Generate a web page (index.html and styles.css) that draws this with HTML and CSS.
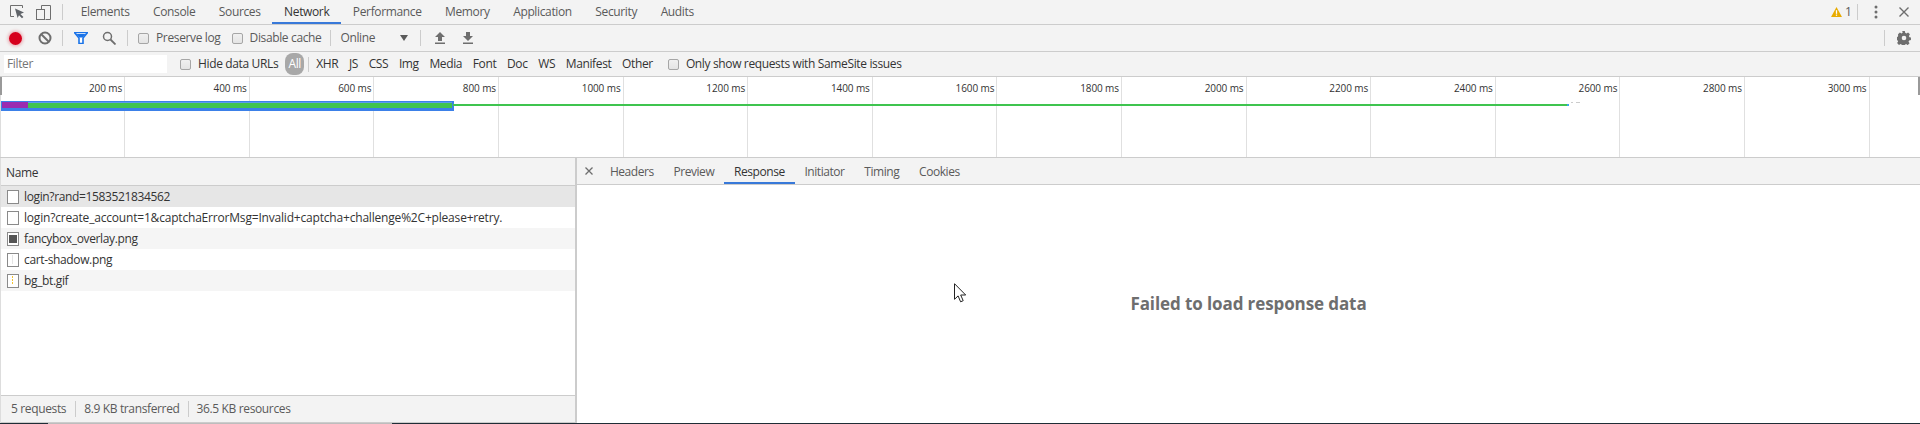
FILE: index.html
```html
<!DOCTYPE html>
<html lang="en">
<head>
<meta charset="utf-8">
<title>DevTools Network</title>
<link rel="stylesheet" href="styles.css">
</head>
<body>
<div class="app">
  <header class="tabbar">
    <svg class="ic-inspect" width="16" height="16" viewBox="0 0 16 16"><path d="M13.5 4V1.5H1.5v11H5" fill="none" stroke="#6e6e6e" stroke-width="1"/><path d="M6 4.5l9 4-3.6 1.4 3 3-1.4 1.4-3-3L8.6 14z" fill="#5f6368"/></svg>
    <svg class="ic-device" width="15" height="15" viewBox="0 0 15 15"><path d="M5.500 4.500V.5h9v14h-5" fill="none" stroke="#6e6e6e"/><rect x=".5" y="4.500" width="8" height="10" fill="none" stroke="#6e6e6e"/></svg>
    <span class="sep sep-tab"></span>
    <nav class="tabs">
      <span class="tab">Elements</span><span class="tab">Console</span><span class="tab">Sources</span><span class="tab active">Network</span><span class="tab">Performance</span><span class="tab">Memory</span><span class="tab">Application</span><span class="tab">Security</span><span class="tab">Audits</span>
    </nav>
    <div class="tab-right">
      <svg width="11" height="10" viewBox="0 0 12 11"><path d="M6 0l6 11H0z" fill="#e8ab00"/><rect x="5.300" y="3.500" width="1.400" height="4" fill="#fff"/><rect x="5.300" y="8.300" width="1.400" height="1.400" fill="#fff"/></svg>
      <span class="warn-count">1</span>
      <span class="sep sep-warn"></span>
      <svg class="ic-dots" width="4" height="14" viewBox="0 0 4 14"><circle cx="2" cy="2" r="1.500" fill="#6e6e6e"/><circle cx="2" cy="7" r="1.500" fill="#6e6e6e"/><circle cx="2" cy="12" r="1.500" fill="#6e6e6e"/></svg>
      <svg class="ic-close" width="10" height="10" viewBox="0 0 10 10"><path d="M.5.500l9 9M9.500.500l-9 9" stroke="#6e6e6e" stroke-width="1.400"/></svg>
    </div>
  </header>

  <div class="toolbar">
    <span class="record"></span>
    <svg class="ic-clear" width="14" height="14" viewBox="0 0 14 14"><circle cx="7" cy="7" r="5.500" fill="none" stroke="#6e6e6e" stroke-width="2"/><path d="M3 3l8 8" stroke="#6e6e6e" stroke-width="2"/></svg>
    <span class="sep sep-a"></span>
    <svg class="ic-filter" width="14" height="12" viewBox="0 0 14 12"><path d="M.5.500h13L9 6v5.500H5V6z" fill="#fff" stroke="#1a73e8" stroke-width="1.600"/><path d="M2.500 2h9L8.500 5.500h-3z" fill="#1a73e8"/></svg>
    <svg class="ic-search" width="14" height="14" viewBox="0 0 14 14"><circle cx="5.500" cy="5.500" r="4" fill="none" stroke="#6e6e6e" stroke-width="1.500"/><path d="M8.500 8.500l5 5" stroke="#6e6e6e" stroke-width="1.800"/></svg>
    <span class="sep sep-b"></span>
    <span class="check chk-preserve"></span><span class="lbl">Preserve log</span>
    <span class="check chk-disable"></span><span class="lbl">Disable cache</span>
    <span class="sep sep-c"></span>
    <span class="lbl online">Online</span>
    <span class="arrow"></span>
    <span class="sep sep-d"></span>
    <svg class="ic-up" width="12" height="12" viewBox="0 0 12 12"><path d="M6 0l5 5H8v4H4V5H1zM1 10.500h10V12H1z" fill="#6e6e6e"/></svg>
    <svg class="ic-down" width="12" height="12" viewBox="0 0 12 12"><path d="M4 0h4v4h3L6 9 1 4h3zM1 10.500h10V12H1z" fill="#6e6e6e"/></svg>
    <span class="sep sep-e"></span>
    <svg class="ic-gear" width="14" height="14" viewBox="0 0 14 14"><path d="M5.600 0h2.800l.4 2 1.300.6L11.900 1.500l2 2-1.100 1.800.6 1.300 1.600.4v2.800l-2 .4-.6 1.300 1.100 1.700-2 2-1.700-1.100-1.300.6-.4 2H5.600l-.4-2-1.300-.6L2.100 15l-2-2 1.100-1.700-.6-1.300-2-.4V6.800l2-.4.6-1.300L1.100 3.500l2-2 1.700 1.100 1.300-.6z" transform="scale(.93)" fill="#6e6e6e"/><circle cx="7" cy="7" r="2.300" fill="#f3f3f3"/></svg>
  </div>

  <div class="filterbar">
    <span class="filter-input">Filter</span>
    <span class="check chk-hide"></span><span class="lbl-dark">Hide data URLs</span>
    <span class="pill">All</span>
    <span class="sep sep-f"></span>
    <span class="type">XHR</span><span class="type">JS</span><span class="type">CSS</span><span class="type">Img</span><span class="type">Media</span><span class="type">Font</span><span class="type">Doc</span><span class="type">WS</span><span class="type">Manifest</span><span class="type">Other</span>
    <span class="check chk-same"></span><span class="lbl-dark">Only show requests with SameSite issues</span>
  </div>

  <section class="timeline">
    <div class="col"><span>200 ms</span></div>
    <div class="col"><span>400 ms</span></div>
    <div class="col"><span>600 ms</span></div>
    <div class="col"><span>800 ms</span></div>
    <div class="col"><span>1000 ms</span></div>
    <div class="col"><span>1200 ms</span></div>
    <div class="col"><span>1400 ms</span></div>
    <div class="col"><span>1600 ms</span></div>
    <div class="col"><span>1800 ms</span></div>
    <div class="col"><span>2000 ms</span></div>
    <div class="col"><span>2200 ms</span></div>
    <div class="col"><span>2400 ms</span></div>
    <div class="col"><span>2600 ms</span></div>
    <div class="col"><span>2800 ms</span></div>
    <div class="col"><span>3000 ms</span></div>
    <i class="scrub scrub-l"></i>
    <i class="scrub scrub-r"></i>
    <div class="bar"><i class="bar-purple"></i></div>
    <i class="line"></i>
    <i class="dots"></i>
  </section>

  <div class="split">
    <aside class="list">
      <div class="list-head">Name</div>
      <div class="row selected"><span class="file"></span>login?rand=1583521834562</div>
      <div class="row row-long"><span class="file"></span>login?create_account=1&amp;captchaErrorMsg=Invalid+captcha+challenge%2C+please+retry.</div>
      <div class="row alt"><span class="file file-dark"></span>fancybox_overlay.png</div>
      <div class="row"><span class="file file-faint"></span>cart-shadow.png</div>
      <div class="row alt"><span class="file file-yellow"></span>bg_bt.gif</div>
      <div class="list-fill"></div>
      <footer class="status">
        <span class="stat stat-1">5 requests</span><span class="stat stat-2">8.9 KB transferred</span><span class="stat">36.5 KB resources</span>
      </footer>
    </aside>
    <main class="detail">
      <div class="detail-tabs">
        <svg class="ic-x" width="8" height="8" viewBox="0 0 8 8"><path d="M.5.500l7 7M7.500.500l-7 7" stroke="#6e6e6e" stroke-width="1.300"/></svg>
        <span class="dtab">Headers</span><span class="dtab">Preview</span><span class="dtab active">Response</span><span class="dtab">Initiator</span><span class="dtab">Timing</span><span class="dtab">Cookies</span>
      </div>
      <div class="empty">Failed to load response data</div>
      <svg class="cursor" width="13" height="20" viewBox="0 0 13 20"><path d="M.5.700v15.600l3.600-3.400 2.500 5.900 2.600-1.100-2.500-5.700h5z" fill="#fff" stroke="#222" stroke-width="1"/></svg>
    </main>
  </div>

  <div class="edge"><i class="edge-dark"></i><i class="edge-gray"></i><i class="edge-dark edge-rest"></i></div>
</div>
</body>
</html>
```

FILE: styles.css
```css
* { box-sizing: border-box; }
html, body { margin: 0; padding: 0; }
body {
  background: #fff;
  color: #333;
  font: 12px/16px "Open Sans", "Liberation Sans", sans-serif;
  letter-spacing: -0.36px;
  overflow: hidden;
}
.app { width: 1920px; height: 424px; display: flex; flex-direction: column; }

.tabbar, .toolbar, .filterbar {
  display: flex;
  align-items: center;
  background: #f3f3f3;
  border-bottom: 1px solid #ccc;
  flex: none;
}
.tabbar { height: 25px; color: #5a5a5a; }
.toolbar { height: 27px; color: #5a5a5a; }
.filterbar { height: 25px; color: #333; }

.sep { flex: none; width: 1px; height: 16px; background: #ccc; }
.ic-inspect { margin-left: 9px; }
.ic-device { margin-left: 11px; }
.sep-tab { margin-left: 11px; }

.tabs { display: flex; align-self: stretch; margin-left: 6px; }
.tab { padding: 0 11.750px; line-height: 23px; height: 24px; }
.tab.active { color: #333; border-bottom: 2px solid #3879d9; }
.tab-right { margin-left: auto; display: flex; align-items: center; }
.warn-count { margin-left: 3px; width: 6px; }
.sep-warn { margin-left: 6px; }
.ic-dots { margin-left: 16px; }
.ic-close { margin-left: 21px; margin-right: 11px; }

.record {
  flex: none;
  width: 13px; height: 13px; margin-left: 9px;
  border-radius: 50%;
  background: #d6001c;
  box-shadow: 0 0 3px 1.500px rgba(214, 0, 28, .25);
}
.ic-clear { margin-left: 16px; }
.sep-a { margin-left: 10px; }
.ic-filter { margin-left: 11px; }
.ic-search { margin-left: 14px; }
.sep-b { margin-left: 11px; }
.check {
  flex: none;
  width: 11px; height: 11px;
  border: 1px solid #a6a6a6;
  border-radius: 2px;
  background: linear-gradient(#f0f0f0, #e4e4e4);
  margin-right: 7px;
}
.chk-preserve { margin-left: 10px; }
.chk-disable { margin-left: 11px; }
.sep-c { margin-left: 9px; }
.online { margin-left: 9px; }
.arrow {
  flex: none;
  margin-left: 25px;
  border-left: 4px solid transparent;
  border-right: 4px solid transparent;
  border-top: 6px solid #5a5a5a;
}
.sep-d { margin-left: 12px; }
.ic-up { margin-left: 13px; }
.ic-down { margin-left: 16px; }
.sep-e { margin-left: auto; }
.ic-gear { margin-left: 12px; margin-right: 9px; }

.filter-input {
  flex: none;
  width: 163px; height: 18px; margin-left: 4px;
  padding-left: 3px;
  background: #fff;
  color: #757575;
  line-height: 18px;
}
.chk-hide { margin-left: 13px; }
.lbl-dark { flex: none; }
.pill {
  flex: none;
  width: 19px; height: 22px; margin-left: 7px;
  border-radius: 8px;
  background: #a8a8a8;
  color: #fff;
  text-align: center;
  line-height: 22px;
}
.sep-f { margin-left: 4px; height: 15px; }
.type { margin-left: 10.600px; flex: none; }
.sep-f + .type { margin-left: 7px; }
.chk-same { margin-left: 15px; }

.timeline {
  position: relative;
  flex: none;
  height: 81px;
  display: grid;
  grid-template-columns: repeat(15, 124.600px) 1fr;
  padding-left: .6px;
  background: #fff;
  border-bottom: 1px solid #ccc;
  box-shadow: inset 1px 0 #ddd;
  font-size: 10px;
  color: #333;
  letter-spacing: -0.1px;
}
.col {
  border-right: 1px solid #e0e0e0;
  text-align: right;
  padding: 3px 2px 0 0;
}
.scrub { position: absolute; top: 0; width: 2px; height: 18px; background: #999; }
.scrub-l { left: 0; }
.scrub-r { right: 0; }
.bar {
  position: absolute;
  left: 1px; top: 24px;
  width: 453px; height: 10px;
  background: #3fc44f;
  border: solid #3b80e8;
  border-width: 1px 2px 3px 1px;
  box-shadow: inset 0 1px 0 #5b9bf0;
}
.bar-purple { display: block; width: 26px; height: 100%; background: #9b2bb0; }
.line { position: absolute; left: 453px; top: 27px; width: 1116px; height: 2px; background: #3fc44f; border-right: 2px solid #3ba7e8; }
.dots { position: absolute; left: 1571px; top: 25px; width: 9px; height: 1px; background: linear-gradient(90deg, #ccc 0 2px, transparent 2px 5px, #ccc 5px); }

.split { flex: 1; min-height: 0; display: flex; }
.list {
  flex: none;
  width: 577px;
  display: flex;
  flex-direction: column;
  border-left: 1px solid #ddd;
  border-right: 2px solid #ccc;
}
.list-head {
  flex: none;
  height: 28px;
  padding-left: 5px;
  line-height: 30px;
  background: #f3f3f3;
  border-bottom: 1px solid #ccc;
}
.row {
  flex: none;
  height: 21px;
  display: flex;
  align-items: center;
  padding-left: 6px;
  color: #333;
  white-space: nowrap;
}
.row.selected { background: #e6e6e6; }
.row.alt { background: #f5f5f5; }
.row-long { letter-spacing: -0.19px; }
.file {
  position: relative;
  flex: none;
  width: 12px; height: 14px;
  margin-right: 5px;
  background: #fff;
  border: 1px solid #8a8a8a;
}
.file-dark::after { content: ""; position: absolute; inset: 2px 1px; background: #555; }
.file-faint::after { content: ""; position: absolute; left: 4px; top: 1px; width: 1px; height: 9px; background: #e4e4e4; }
.file-yellow::after { content: ""; position: absolute; left: 4px; top: 1px; width: 1px; height: 9px; background: repeating-linear-gradient(#f2c230 0 2px, #fff 2px 3px); }
.list-fill { flex: 1; background: #fff; }
.status {
  flex: none;
  height: 28px;
  display: flex;
  align-items: center;
  padding-left: 10px;
  background: #f3f3f3;
  border-top: 1px solid #ccc;
  border-bottom: 1px solid #ccc;
  color: #5a5a5a;
}
.stat { flex: none; }
.stat-1 { padding-right: 9px; border-right: 1px solid #ccc; margin-right: 8px; }
.stat-2 { padding-right: 8px; border-right: 1px solid #ccc; margin-right: 8px; }

.detail { position: relative; flex: 1; display: flex; flex-direction: column; background: #fff; }
.detail-tabs {
  flex: none;
  height: 27px;
  display: flex;
  align-items: stretch;
  background: #f3f3f3;
  border-bottom: 1px solid #ccc;
  color: #5a5a5a;
  letter-spacing: -0.45px;
}
.ic-x { align-self: center; margin-left: 8px; margin-right: 7px; flex: none; }
.dtab { padding: 0 9.900px; line-height: 27px; height: 26px; }
.dtab.active { color: #333; border-bottom: 2px solid #3879d9; }
.empty {
  flex: 1;
  display: flex;
  align-items: center;
  justify-content: center;
  font-size: 17px;
  font-weight: 700;
  letter-spacing: -0.1px;
  color: #6e6e6e;
}
.cursor { position: absolute; left: 377px; top: 125px; }

.edge { flex: none; height: 1px; display: flex; }
.edge-dark { width: 48px; background: #1f2d36; }
.edge-gray { width: 344px; background: #bdbdbd; }
.edge-rest { flex: 1; }
```
